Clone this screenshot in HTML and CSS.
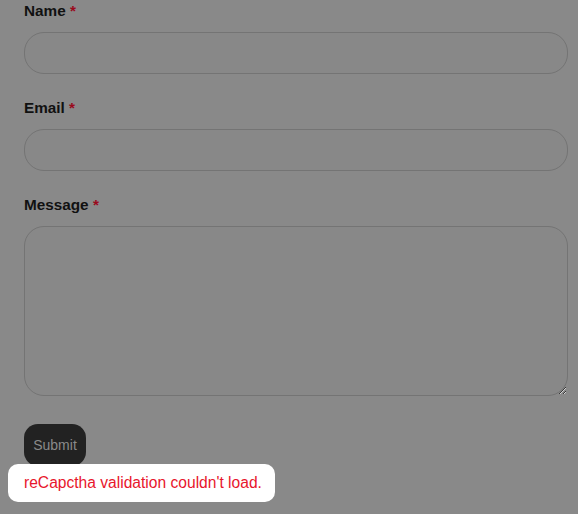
FILE: index.html
```html
<!DOCTYPE html>
<html lang="en">
<head>
    <meta charset="UTF-8">
    <title>Contact</title>
    <link rel="stylesheet" href="styles.css">
</head>
<body>
<form class="form">
    <div class="field">
        <label class="label">Name <span class="req">*</span></label>
        <input class="input" type="text">
    </div>
    <div class="field">
        <label class="label">Email <span class="req">*</span></label>
        <input class="input" type="email">
    </div>
    <div class="field">
        <label class="label">Message <span class="req">*</span></label>
        <textarea class="textarea"></textarea>
    </div>
    <button class="submit" type="button">Submit</button>
    <p class="error">reCapctha validation couldn't load.</p>
</form>
</body>
</html>
```

FILE: styles.css
```css
*{  margin: 0;
    padding: 0;
    box-sizing: border-box;
}
body{
    background: #898989;
    font-family: "Liberation Sans", Arial, sans-serif;
}
.form{
    padding: 0 10px 0 24px;
}
.field{
    display: flex;
    flex-direction: column;
    margin-bottom: 23px;
}
.label{
    height: 22px;
    line-height: 22px;
    font-size: 15.3px;
    font-weight: 700;
    color: #111;
    margin-bottom: 10px;
}
.req{
    color: #9a0a1c;
}
.input,.textarea{
    width: 100%;
    height: 42px;
    border: 1px solid #747474;
    border-radius: 20px;
    background: #888888;
    font: inherit;
}
.textarea{
    height: 170px;
    resize: vertical;
}
.field:last-of-type{
    margin-bottom: 28px;
}
.submit{
    display: block;
    width: 62px;
    height: 42px;
    border: none;
    border-radius: 14px;
    background: #222222;
    color: #8a8a8a;
    font-family: inherit;
    font-size: 14px;
}
.error{
    display: inline-block;
    margin: -2px 0 0 -16px;
    padding: 0 13px 0 16px;
    height: 38px;
    line-height: 38px;
    background: #ffffff;
    border-radius: 10px;
    color: #e8162c;
    font-size: 15.6px;
}
```
